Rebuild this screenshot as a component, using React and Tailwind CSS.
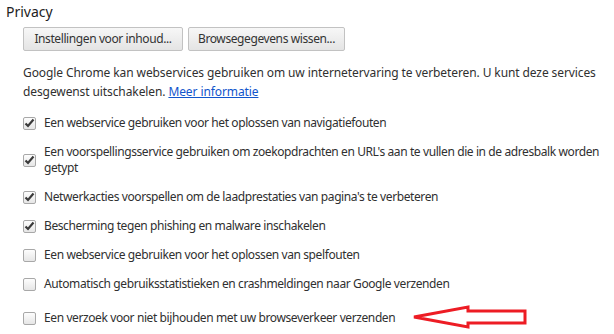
const rows = [
  { label: 'Een webservice gebruiken voor het oplossen van navigatiefouten', checked: true },
  {
    label: "Een voorspellingsservice gebruiken om zoekopdrachten en URL's aan te vullen die in de adresbalk worden getypt",
    checked: true,
  },
  { label: "Netwerkacties voorspellen om de laadprestaties van pagina's te verbeteren", checked: true },
  { label: 'Bescherming tegen phishing en malware inschakelen', checked: true },
  { label: 'Een webservice gebruiken voor het oplossen van spelfouten', checked: false },
  { label: 'Automatisch gebruiksstatistieken en crashmeldingen naar Google verzenden', checked: false },
  { label: 'Een verzoek voor niet bijhouden met uw browseverkeer verzenden', checked: false, arrow: true },
];

const Checkbox = ({ checked }) => (
  <span className="flex h-[13px] w-[13px] shrink-0 items-center justify-center rounded-[2px] border border-[#a8a8a8] bg-gradient-to-b from-[#fdfdfd] to-[#e6e6e6]">
    {checked && (
      <svg width="11" height="10" viewBox="0 0 11 10">
        <path d="M1.5 5.5 L4 8 L9.5 1.5" fill="none" stroke="#3a3a3a" strokeWidth="2.2" />
      </svg>
    )}
  </span>
);

const Arrow = () => (
  <svg width="120" height="26" viewBox="0 0 120 26" className="ml-[8px] shrink-0">
    <path
      d="M3 12 L57 2 L57 6 L114 6 L114 18 L57 18 L57 22 Z"
      fill="none"
      stroke="#ed1c24"
      strokeWidth="3"
      strokeLinejoin="miter"
    />
  </svg>
);

export default function App() {
  return (
    <div className="h-[334px] w-[614px] overflow-hidden bg-white font-['Noto_Sans',sans-serif] text-[12px] text-[#303030]">
      <div className="pl-[6px] pt-[2px] text-[14px] leading-[20px] text-[#222]">Privacy</div>
      <div className="pl-[23px]">
        <div className="mt-[5px] flex gap-[5px] tracking-[-0.4px]">
          <button className="h-[24px] w-[160px] rounded-[2px] border border-[#c2c2c2] bg-gradient-to-b from-[#f7f7f7] to-[#e4e4e4] text-[12px] text-[#333]">
            Instellingen voor inhoud...
          </button>
          <button className="h-[24px] w-[157px] rounded-[2px] border border-[#c2c2c2] bg-gradient-to-b from-[#f7f7f7] to-[#e4e4e4] text-[12px] text-[#333]">
            Browsegegevens wissen...
          </button>
        </div>
        <p className="mt-[12px] leading-[19px] tracking-[-0.1px]">
          Google Chrome kan webservices gebruiken om uw internetervaring te verbeteren. U kunt deze services
          <br />
          desgewenst uitschakelen. <span className="text-[#15c] underline">Meer informatie</span>
        </p>
        <ul className="mt-[14px] flex flex-col gap-[13px] tracking-[-0.4px]">
          {rows.map((r) => (
            <li key={r.label} className="flex items-center gap-[8px] leading-[16px]">
              <Checkbox checked={r.checked} />
              <span className="max-w-[560px]">{r.label}</span>
              {r.arrow && <Arrow />}
            </li>
          ))}
        </ul>
      </div>
    </div>
  );
}
